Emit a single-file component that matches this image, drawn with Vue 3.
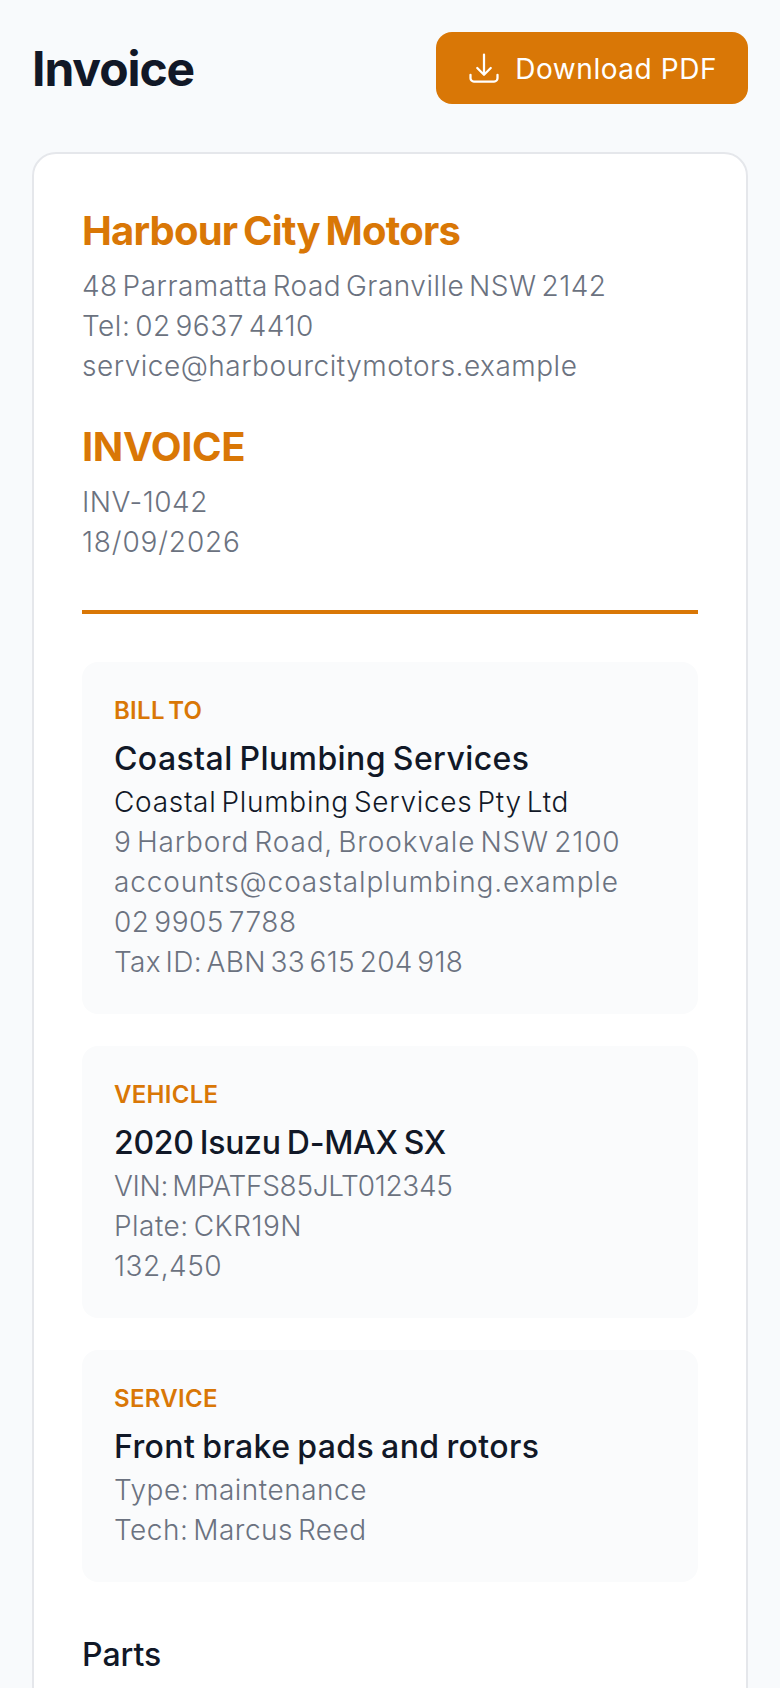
<template>
  <div class="page">
    <!-- 顶部标题和下载按钮 -->
    <header class="top">
      <h1>Invoice</h1>
      <button class="download">
        <svg viewBox="0 0 24 24" fill="none" stroke="currentColor" stroke-width="1.5" stroke-linecap="round" stroke-linejoin="round">
          <path d="M3 16.5v2.25A2.25 2.25 0 0 0 5.25 21h13.5A2.25 2.25 0 0 0 21 18.75V16.5M16.5 12 12 16.5m0 0L7.5 12m4.5 4.5V3" />
        </svg>
        <span>Download PDF</span>
      </button>
    </header>

    <main class="card">
      <section class="company">
        <h2>{{ company.name }}</h2>
        <p v-for="line in company.lines" :key="line">{{ line }}</p>
      </section>

      <section class="meta">
        <h2 class="meta-title">INVOICE</h2>
        <p>INV-1042</p>
        <p class="wide">18/09/2026</p>
      </section>

      <hr class="rule" />

      <section v-for="box in boxes" :key="box.label" class="box">
        <div class="label">{{ box.label }}</div>
        <div class="name" :class="fit[box.name]">{{ box.name }}</div>
        <p v-if="box.sub" class="sub">{{ box.sub }}</p>
        <p v-for="line in box.lines" :key="line" :class="fit[line]">{{ line }}</p>
      </section>

      <h3 class="parts">Parts</h3>
    </main>
  </div>
</template>

<script setup>
const company = {
  name: 'Harbour City Motors',
  lines: [
    '48 Parramatta Road Granville NSW 2142',
    'Tel: 02 9637 4410',
    'service@harbourcitymotors.example'
  ]
};

const boxes = [
  {
    label: 'BILL TO',
    name: 'Coastal Plumbing Services',
    sub: 'Coastal Plumbing Services Pty Ltd',
    lines: [
      '9 Harbord Road, Brookvale NSW 2100',
      'accounts@coastalplumbing.example',
      '02 9905 7788',
      'Tax ID: ABN 33 615 204 918'
    ]
  },
  {
    label: 'VEHICLE',
    name: '2020 Isuzu D-MAX SX',
    lines: ['VIN: MPATFS85JLT012345', 'Plate: CKR19N', '132,450']
  },
  {
    label: 'SERVICE',
    name: 'Front brake pads and rotors',
    lines: ['Type: maintenance', 'Tech: Marcus Reed']
  }
];

// 个别行的字距微调
const fit = {
  '2020 Isuzu D-MAX SX': 'tight',
  'VIN: MPATFS85JLT012345': 'tight',
  'Tax ID: ABN 33 615 204 918': 'snug',
  '9 Harbord Road, Brookvale NSW 2100': 'wide',
  'accounts@coastalplumbing.example': 'wide'
};
</script>

<style>
html, body {
  margin: 0;
  background: #f8fafc;
}
</style>

<style scoped>
.page {
  height: 1688px;
  overflow: hidden;
  box-sizing: border-box;
  padding: 32px 32px 0;
  background: #f8fafc;
  font-family: Inter, "Liberation Sans", sans-serif;
  color: #111827;
}

.top {
  display: flex;
  justify-content: space-between;
  align-items: center;
  height: 72px;
  margin-bottom: 48px;
}

h1 {
  margin: 0;
  padding-top: 2px;
  font-size: 48px;
  line-height: 64px;
  font-weight: 700;
  letter-spacing: -1.1px;
}

.download {
  display: flex;
  align-items: center;
  gap: 13px;
  height: 72px;
  padding: 0 31px 0 30px;
  border: none;
  border-radius: 16px;
  background: #d97706;
  color: #fff;
  font-family: inherit;
  font-size: 28px;
  font-weight: 400;
  letter-spacing: 0.55px;
}

.download span {
  padding-top: 2px;
}

.download svg {
  width: 36px;
  height: 36px;
}

.card {
  padding: 48px;
  min-height: 1600px;
  background: #fff;
  border: 2px solid #e5e7eb;
  border-radius: 24px;
}

h2 {
  margin: 0 0 7px;
  padding-top: 1px;
  font-size: 40px;
  line-height: 56px;
  font-weight: 700;
  letter-spacing: -0.8px;
  word-spacing: -3px;
  color: #d97706;
}

p {
  margin: 0;
  font-size: 28px;
  line-height: 40px;
  font-weight: 350;
  letter-spacing: 0.5px;
  word-spacing: -3.5px;
  color: #6b7280;
}

p.tight {
  letter-spacing: -0.3px;
}

p.snug {
  letter-spacing: 0.3px;
}

p.wide {
  letter-spacing: 0.85px;
}

.meta {
  margin-top: 32px;
}

.meta-title {
  letter-spacing: -0.4px;
}

.rule {
  height: 4px;
  margin: 48px 0;
  border: none;
  background: #d97706;
}

.box {
  margin-bottom: 32px;
  padding: 32px;
  background: #fafbfc;
  border-radius: 16px;
}

.label {
  padding-top: 1px;
  margin-bottom: 8px;
  font-size: 24px;
  line-height: 32px;
  font-weight: 600;
  letter-spacing: 0.3px;
  word-spacing: -3px;
  color: #d97706;
}

.name {
  margin-bottom: -1px;
  font-size: 32px;
  line-height: 48px;
  font-weight: 550;
  letter-spacing: 0.4px;
  word-spacing: -2px;
}

.name.tight {
  letter-spacing: -0.3px;
}

.box .sub {
  letter-spacing: 0.7px;
  color: #111827;
}

.parts {
  margin: 48px 0 0;
  padding-top: 1px;
  font-size: 32px;
  line-height: 48px;
  font-weight: 550;
}
</style>
